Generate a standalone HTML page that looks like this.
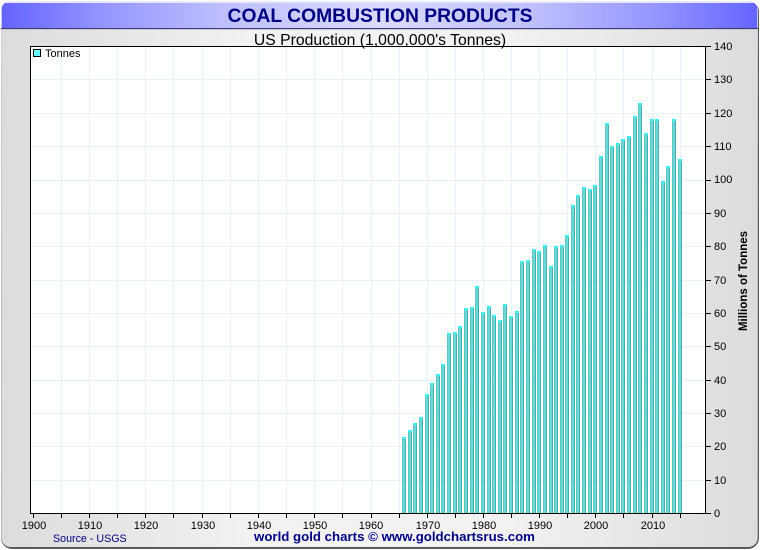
<!DOCTYPE html>
<html><head><meta charset="utf-8"><style>
html,body{margin:0;padding:0;background:#fff;width:760px;height:550px;overflow:hidden}
svg{display:block;font-family:"Liberation Sans",sans-serif}
.g{stroke:#e8f2fa;stroke-width:1;shape-rendering:crispEdges;fill:none}
.k{stroke:#000;stroke-width:1;shape-rendering:crispEdges;fill:none}
.b rect{width:4px;fill:url(#bar);shape-rendering:crispEdges}
.l text{font-size:11px;fill:#000}
</style></head><body>
<svg width="760" height="550" viewBox="0 0 760 550" xmlns="http://www.w3.org/2000/svg">
<defs>
<linearGradient id="bg" x1="0" x2="1" y1="0" y2="0"><stop offset="0" stop-color="#dcdcdc"/><stop offset=".33" stop-color="#f2f2f2"/><stop offset=".67" stop-color="#f2f2f2"/><stop offset="1" stop-color="#dcdcdc"/></linearGradient>
<linearGradient id="tt" x1="0" x2="1" y1="0" y2="0"><stop offset="0" stop-color="#6464ff"/><stop offset=".13" stop-color="#9494ff"/><stop offset=".3" stop-color="#c0c0ff"/><stop offset=".5" stop-color="#dadaff"/><stop offset=".7" stop-color="#c0c0ff"/><stop offset=".87" stop-color="#9494ff"/><stop offset="1" stop-color="#6464ff"/></linearGradient>
<linearGradient id="ed" x1="0" x2="0" y1="0" y2="1"><stop offset="0" stop-color="#c4c4f4"/><stop offset=".06" stop-color="#d0d0e0"/><stop offset=".2" stop-color="#c8c8c8"/><stop offset="1" stop-color="#b4b4b4"/></linearGradient>
<linearGradient id="bar" x1="0" x2="1" y1="0" y2="0"><stop offset="0" stop-color="#5cc8c4"/><stop offset=".25" stop-color="#5cc8c4"/><stop offset=".25" stop-color="#70d8d4"/><stop offset=".75" stop-color="#70d8d4"/><stop offset=".75" stop-color="#40b0b0"/><stop offset="1" stop-color="#40b0b0"/></linearGradient>
<clipPath id="fr"><rect x="1" y="1" width="757" height="546" rx="10"/></clipPath>
</defs>
<rect x="1" y="1" width="758" height="548" rx="11" fill="#5a5a5a"/>
<rect x="1" y="1" width="757" height="546" rx="10" fill="url(#ed)"/>
<g clip-path="url(#fr)">
<rect x="2" y="2" width="755" height="546" rx="9" fill="url(#bg)"/>
<rect x="2" y="3" width="755" height="25" fill="url(#tt)"/>
<rect x="2" y="1" width="755" height="2" fill="#e8e8ff"/>
<rect x="0" y="28" width="760" height="1" fill="#3c3c78"/>
<rect x="0" y="29" width="760" height="1" fill="#c8c8d8"/>
</g>
<text x="380" y="22" text-anchor="middle" font-size="19.3" font-weight="bold" fill="#000080">COAL COMBUSTION PRODUCTS</text>
<rect x="30" y="46" width="675" height="467" fill="#fff"/>
<path class="g" d="M61.5 47V513M89.5 47V513M117.5 47V513M145.5 47V513M173.5 47V513M202.5 47V513M230.5 47V513M258.5 47V513M286.5 47V513M314.5 47V513M342.5 47V513M371.5 47V513M399.5 47V513M427.5 47V513M455.5 47V513M483.5 47V513M511.5 47V513M539.5 47V513M567.5 47V513M595.5 47V513M623.5 47V513M652.5 47V513M680.5 47V513"/>
<path class="g" d="M31 79.5H705M31 113.5H705M31 146.5H705M31 180.5H705M31 213.5H705M31 246.5H705M31 280.5H705M31 313.5H705M31 346.5H705M31 380.5H705M31 413.5H705M31 446.5H705M31 480.5H705"/>
<g class="b">
<rect x="402" y="437" height="76"/><rect x="408" y="430" height="83"/><rect x="413" y="423" height="90"/><rect x="419" y="417" height="96"/><rect x="425" y="394" height="119"/><rect x="430" y="383" height="130"/><rect x="436" y="374" height="139"/><rect x="441" y="364" height="149"/><rect x="447" y="333" height="180"/><rect x="453" y="332" height="181"/><rect x="458" y="326" height="187"/><rect x="464" y="308" height="205"/><rect x="470" y="307" height="206"/><rect x="475" y="286" height="227"/><rect x="481" y="312" height="201"/><rect x="487" y="306" height="207"/><rect x="492" y="315" height="198"/><rect x="498" y="320" height="193"/><rect x="503" y="304" height="209"/><rect x="509" y="316" height="197"/><rect x="515" y="311" height="202"/><rect x="520" y="261" height="252"/><rect x="526" y="260" height="253"/><rect x="532" y="249" height="264"/><rect x="537" y="251" height="262"/><rect x="543" y="245" height="268"/><rect x="549" y="266" height="247"/><rect x="554" y="246" height="267"/><rect x="560" y="245" height="268"/><rect x="565" y="235" height="278"/><rect x="571" y="205" height="308"/><rect x="576" y="195" height="318"/><rect x="582" y="187" height="326"/><rect x="588" y="189" height="324"/><rect x="593" y="185" height="328"/><rect x="599" y="156" height="357"/><rect x="605" y="123" height="390"/><rect x="610" y="146" height="367"/><rect x="616" y="143" height="370"/><rect x="621" y="139" height="374"/><rect x="627" y="136" height="377"/><rect x="633" y="116" height="397"/><rect x="638" y="103" height="410"/><rect x="644" y="133" height="380"/><rect x="650" y="119" height="394"/><rect x="655" y="119" height="394"/><rect x="661" y="181" height="332"/><rect x="666" y="166" height="347"/><rect x="672" y="119" height="394"/><rect x="678" y="159" height="354"/>
</g>
<path fill="#40f0f0" shape-rendering="crispEdges" d="M402 437h4v2h-4zM408 430h4v2h-4zM413 423h4v2h-4zM419 417h4v2h-4zM425 394h4v2h-4zM430 383h4v2h-4zM436 374h4v2h-4zM441 364h4v2h-4zM447 333h4v2h-4zM453 332h4v2h-4zM458 326h4v2h-4zM464 308h4v2h-4zM470 307h4v2h-4zM475 286h4v2h-4zM481 312h4v2h-4zM487 306h4v2h-4zM492 315h4v2h-4zM498 320h4v2h-4zM503 304h4v2h-4zM509 316h4v2h-4zM515 311h4v2h-4zM520 261h4v2h-4zM526 260h4v2h-4zM532 249h4v2h-4zM537 251h4v2h-4zM543 245h4v2h-4zM549 266h4v2h-4zM554 246h4v2h-4zM560 245h4v2h-4zM565 235h4v2h-4zM571 205h4v2h-4zM576 195h4v2h-4zM582 187h4v2h-4zM588 189h4v2h-4zM593 185h4v2h-4zM599 156h4v2h-4zM605 123h4v2h-4zM610 146h4v2h-4zM616 143h4v2h-4zM621 139h4v2h-4zM627 136h4v2h-4zM633 116h4v2h-4zM638 103h4v2h-4zM644 133h4v2h-4zM650 119h4v2h-4zM655 119h4v2h-4zM661 181h4v2h-4zM666 166h4v2h-4zM672 119h4v2h-4zM678 159h4v2h-4z"/>
<rect x="30.5" y="46.5" width="675" height="467" class="k"/>
<path class="k" d="M33.5 514V518M61.5 514V518M89.5 514V518M117.5 514V518M145.5 514V518M173.5 514V518M202.5 514V518M230.5 514V518M258.5 514V518M286.5 514V518M314.5 514V518M342.5 514V518M371.5 514V518M399.5 514V518M427.5 514V518M455.5 514V518M483.5 514V518M511.5 514V518M539.5 514V518M567.5 514V518M595.5 514V518M623.5 514V518M652.5 514V518M680.5 514V518"/>
<path class="k" d="M706 46.5H711M706 79.5H711M706 113.5H711M706 146.5H711M706 180.5H711M706 213.5H711M706 246.5H711M706 280.5H711M706 313.5H711M706 346.5H711M706 380.5H711M706 413.5H711M706 446.5H711M706 480.5H711M706 513.5H711"/>
<rect x="33.5" y="49.5" width="7" height="7" fill="#66ffff" stroke="#000" shape-rendering="crispEdges"/>
<text x="45" y="57" font-size="11" fill="#000">Tonnes</text>
<text x="380" y="45" text-anchor="middle" font-size="15.75" fill="#000">US Production (1,000,000's Tonnes)</text>
<g class="l" text-anchor="start">
<text x="714" y="50">140</text><text x="714" y="83">130</text><text x="714" y="117">120</text><text x="714" y="150">110</text><text x="714" y="183">100</text><text x="714" y="217">90</text><text x="714" y="250">80</text><text x="714" y="284">70</text><text x="714" y="317">60</text><text x="714" y="350">50</text><text x="714" y="384">40</text><text x="714" y="417">30</text><text x="714" y="450">20</text><text x="714" y="484">10</text><text x="714" y="517">0</text>
</g>
<g class="l" text-anchor="middle">
<text x="34" y="529">1900</text><text x="90" y="529">1910</text><text x="146" y="529">1920</text><text x="203" y="529">1930</text><text x="259" y="529">1940</text><text x="315" y="529">1950</text><text x="371" y="529">1960</text><text x="428" y="529">1970</text><text x="484" y="529">1980</text><text x="540" y="529">1990</text><text x="596" y="529">2000</text><text x="653" y="529">2010</text>
</g>
<text transform="translate(747 281) rotate(-90)" text-anchor="middle" font-size="11.5" font-weight="bold" fill="#000">Millions of Tonnes</text>
<text x="53" y="542" font-size="10.7" fill="#000080">Source - USGS</text>
<text x="394.5" y="541" text-anchor="middle" font-size="13.25" font-weight="bold" fill="#000080">world gold charts © www.goldchartsrus.com</text>
</svg>
</body></html>
